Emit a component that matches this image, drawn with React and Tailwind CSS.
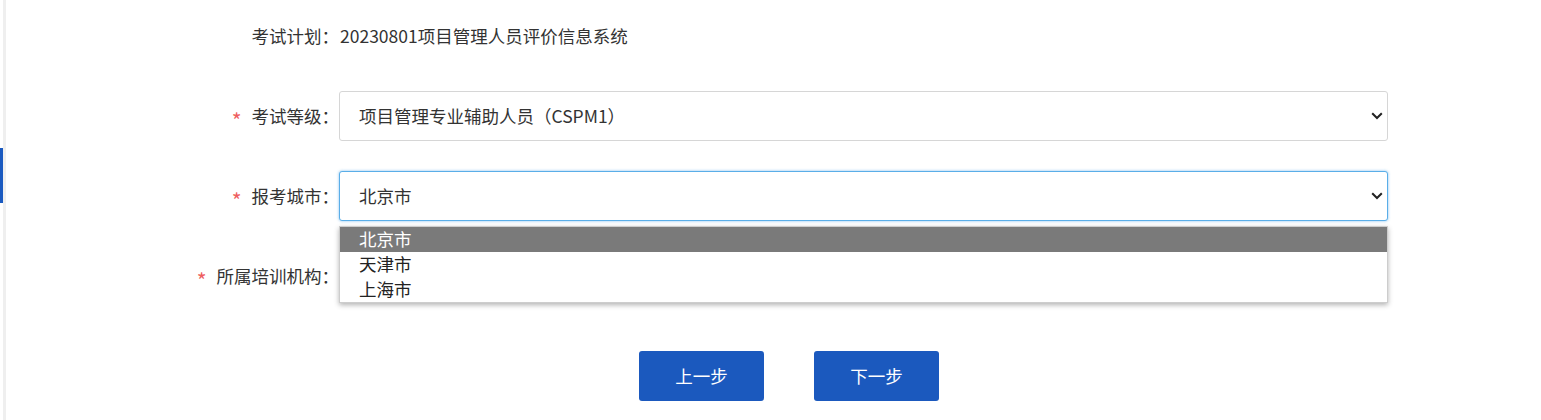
import React from 'react';

function Chevron() {
  return (
    <svg width="12" height="8" viewBox="0 0 12 8" className="absolute right-[4px] top-1/2 -translate-y-1/2">
      <path d="M1.2 1.2 L6 6 L10.8 1.2" fill="none" stroke="#222" strokeWidth="2" />
    </svg>
  );
}

function Row({ label, required, children }) {
  return (
    <div className="flex h-[50px] items-center">
      <div className="w-[333px] shrink-0 flex justify-end items-center text-[17.5px] text-[#333]">
        {required && <span className="text-[#ee5f5f] text-[21px] leading-none mr-[10px] relative top-[4px]">*</span>}
        <span>{label}：</span>
      </div>
      <div className="w-[1049px] shrink-0 relative h-full flex items-center">{children}</div>
    </div>
  );
}

function SelectBox({ value, focused }) {
  return (
    <div
      className={
        focused
          ? 'relative h-[50px] w-full flex items-center pl-[19px] rounded-[3px] border border-[#5aaee8] shadow-[0_0_3px_rgba(102,175,233,0.8)] bg-white text-[17.5px] text-[#333]'
          : 'relative h-[50px] w-full flex items-center pl-[19px] rounded-[3px] border border-[#d6d6d6] bg-white text-[17.5px] text-[#333]'
      }
    >
      {value}
      <Chevron />
    </div>
  );
}

const cities = ['北京市', '天津市', '上海市'];

export default function App() {
  return (
    <div
      className="flex w-full h-[420px] bg-white overflow-hidden"
      style={{ fontFamily: '"Noto Sans CJK SC", "Noto Sans", sans-serif' }}
    >
      <div className="w-[6px] shrink-0 flex">
        <div className="w-[3px]">
          <div className="mt-[148px] h-[55px] bg-[#1a5ac0]" />
        </div>
        <div className="w-[3px] bg-[#efefef]" />
      </div>

      <div className="flex-1 pt-[11px]">
        <div className="flex flex-col gap-[30px]">
          <Row label="考试计划">
            <span className="pl-[1px] text-[17.5px] text-[#333]">20230801项目管理人员评价信息系统</span>
          </Row>
          <Row label="考试等级" required>
            <SelectBox value="项目管理专业辅助人员（CSPM1）" />
          </Row>
          <Row label="报考城市" required>
            <SelectBox value="北京市" focused />
            <div className="absolute top-[55px] left-0 right-0 z-10 bg-white border border-[#cdcdcd] shadow-[0_2px_5px_rgba(0,0,0,0.3)] text-[17.5px]">
              {cities.map((c, i) => (
                <div
                  key={c}
                  className={
                    i === 0
                      ? 'h-[25px] leading-[23px] pl-[19px] bg-[#7a7a7a] text-white'
                      : 'h-[25px] leading-[23px] pl-[19px] text-[#222]'
                  }
                >
                  {c}
                </div>
              ))}
            </div>
          </Row>
          <Row label="所属培训机构" required>
            <SelectBox value="" />
          </Row>
        </div>

        <div className="flex gap-[50px] pl-[633px] mt-[50px]">
          <button className="w-[125px] h-[50px] rounded-[3px] bg-[#1b59be] text-white text-[17.5px]">上一步</button>
          <button className="w-[125px] h-[50px] rounded-[3px] bg-[#1b59be] text-white text-[17.5px]">下一步</button>
        </div>
      </div>
    </div>
  );
}
